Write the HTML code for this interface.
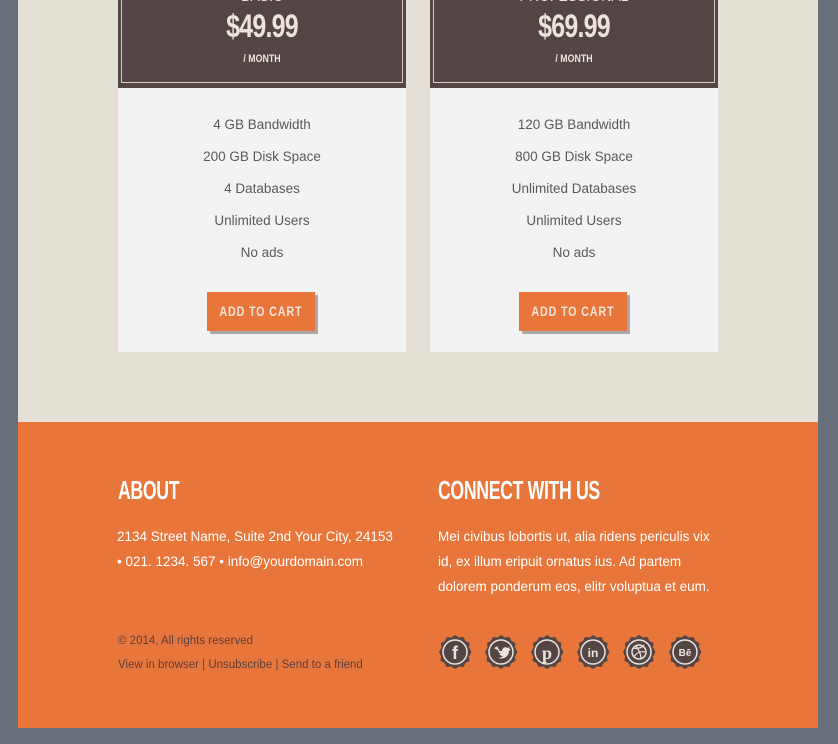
<!DOCTYPE html>
<html><head><meta charset="utf-8"><style>
body{margin:0;width:838px;height:744px;background:#67707a;font-family:"Liberation Sans",sans-serif;position:relative;overflow:hidden}
.beige{position:absolute;left:18px;top:0;width:800px;height:422px;background:#e5e0d5}
.orange{position:absolute;left:18px;top:422px;width:800px;height:306px;background:#e8763a}
.card{position:absolute;top:0;width:288px;height:352px;background:#f3f3f3}
.head{position:absolute;left:0;top:0;width:288px;height:88px;background:#544545}
.inner{position:absolute;left:3px;top:-3px;width:280px;height:85px;border:1px solid #d8ccc4;border-top:none}
.price{position:absolute;top:8px;width:100%;text-align:center;color:#ece4dc;font-weight:bold;font-size:32px;letter-spacing:-1px;transform:scaleX(.78)}
.mon{position:absolute;top:53px;width:100%;text-align:center;color:#ece4dc;font-weight:bold;font-size:11px;transform:scaleX(.8)}
.plan{position:absolute;top:-12px;width:100%;text-align:center;color:#ece4dc;font-size:14px}
.feat{position:absolute;width:100%;text-align:center;color:#5a5a5a;font-size:13.5px}
.btn{position:absolute;left:89px;top:292px;width:108px;height:39px;background:#e8763a;box-shadow:3px 3px 0 #a8a8a8;color:#f3e2d6;line-height:39px;text-align:center}
.btn span{display:inline-block;font-weight:bold;font-size:13.5px;letter-spacing:1px;transform:scaleX(.8)}
h2{position:absolute;margin:0;color:#fff;font-weight:bold;font-size:26px;transform:scaleX(.68);transform-origin:left;letter-spacing:-0.5px}
.t{position:absolute;color:#fff;font-size:13.5px;line-height:25px}
.s{position:absolute;color:#5c4040;font-size:11.5px;line-height:24px}
.ic{position:absolute;top:635px}
</style></head><body>
<div class="beige"></div>
<div class="orange"></div>
<div class="card" style="left:118px">
 <div class="head"><div class="plan">BASIC</div><div class="inner"></div><div class="price">$49.99</div><div class="mon">/ MONTH</div></div>
 <div class="feat" style="top:117px">4 GB Bandwidth</div>
 <div class="feat" style="top:149px">200 GB Disk Space</div>
 <div class="feat" style="top:181px">4 Databases</div>
 <div class="feat" style="top:213px">Unlimited Users</div>
 <div class="feat" style="top:245px">No ads</div>
 <div class="btn"><span>ADD TO CART</span></div>
</div>
<div class="card" style="left:430px">
 <div class="head"><div class="plan">PROFESSIONAL</div><div class="inner"></div><div class="price">$69.99</div><div class="mon">/ MONTH</div></div>
 <div class="feat" style="top:117px">120 GB Bandwidth</div>
 <div class="feat" style="top:149px">800 GB Disk Space</div>
 <div class="feat" style="top:181px">Unlimited Databases</div>
 <div class="feat" style="top:213px">Unlimited Users</div>
 <div class="feat" style="top:245px">No ads</div>
 <div class="btn"><span>ADD TO CART</span></div>
</div>
<h2 style="left:118px;top:475px">ABOUT</h2>
<h2 style="left:438px;top:475px">CONNECT WITH US</h2>
<div class="t" style="left:117px;top:524px;width:300px">2134 Street Name, Suite 2nd Your City, 24153<br>• 021. 1234. 567 • info@yourdomain.com</div>
<div class="t" style="left:438px;top:524px;width:284px">Mei civibus lobortis ut, alia ridens periculis vix id, ex illum eripuit ornatus ius. Ad partem dolorem ponderum eos, elitr voluptua et eum.</div>
<div class="s" style="left:118px;top:629px">© 2014, All rights reserved<br>View in browser | Unsubscribe | Send to a friend</div>
<svg width="0" height="0" style="position:absolute"><defs><g id="b"><path fill="#544545" d="M17 0l4 2.5 4.5-.5 2 4 4 2-.5 4.5L33.5 17l-2.5 4.5.5 4.5-4 2-2 4-4.5-.5L17 34l-4-2.5-4.5.5-2-4-4-2 .5-4.5L1 17l2.5-4.5L3 8l4-2 2-4 4.5.5z"/><circle cx="17" cy="17" r="12" fill="none" stroke="#ece4dc" stroke-width="1.5"/></g></defs></svg>
<svg class="ic" style="left:438px" width="34" height="34"><use href="#b"/><text x="17" y="24" text-anchor="middle" fill="#ece4dc" font-size="18" font-weight="bold" font-family="Liberation Sans">f</text></svg>
<svg class="ic" style="left:484px" width="34" height="34"><use href="#b"/><path fill="#ece4dc" d="M10 13c3 2 6 3 8 3 0-3 3-5 6-3l2-1-1 2 2 0-2 2c0 5-5 9-11 7 2 0 4-1 5-2-2 0-3-1-4-2h2c-2-1-3-2-3-4h2c-2-1-3-3-2-4z"/></svg>
<svg class="ic" style="left:530px" width="34" height="34"><use href="#b"/><text x="17" y="24" text-anchor="middle" fill="#ece4dc" font-size="18" font-weight="bold" font-family="Liberation Serif">p</text></svg>
<svg class="ic" style="left:576px" width="34" height="34"><use href="#b"/><text x="17" y="22" text-anchor="middle" fill="#ece4dc" font-size="12" font-weight="bold" font-family="Liberation Sans">in</text></svg>
<svg class="ic" style="left:622px" width="34" height="34"><use href="#b"/><circle cx="17" cy="17" r="7" fill="none" stroke="#ece4dc" stroke-width="1.5"/><path d="M11 13c4 1 9 0 11-3M12 22c2-4 6-6 11-5M14 11c3 4 5 9 5 12" fill="none" stroke="#ece4dc" stroke-width="1.2"/></svg>
<svg class="ic" style="left:668px" width="34" height="34"><use href="#b"/><text x="17" y="21" text-anchor="middle" fill="#ece4dc" font-size="10" font-weight="bold" font-family="Liberation Sans">Bē</text></svg>
</body></html>
